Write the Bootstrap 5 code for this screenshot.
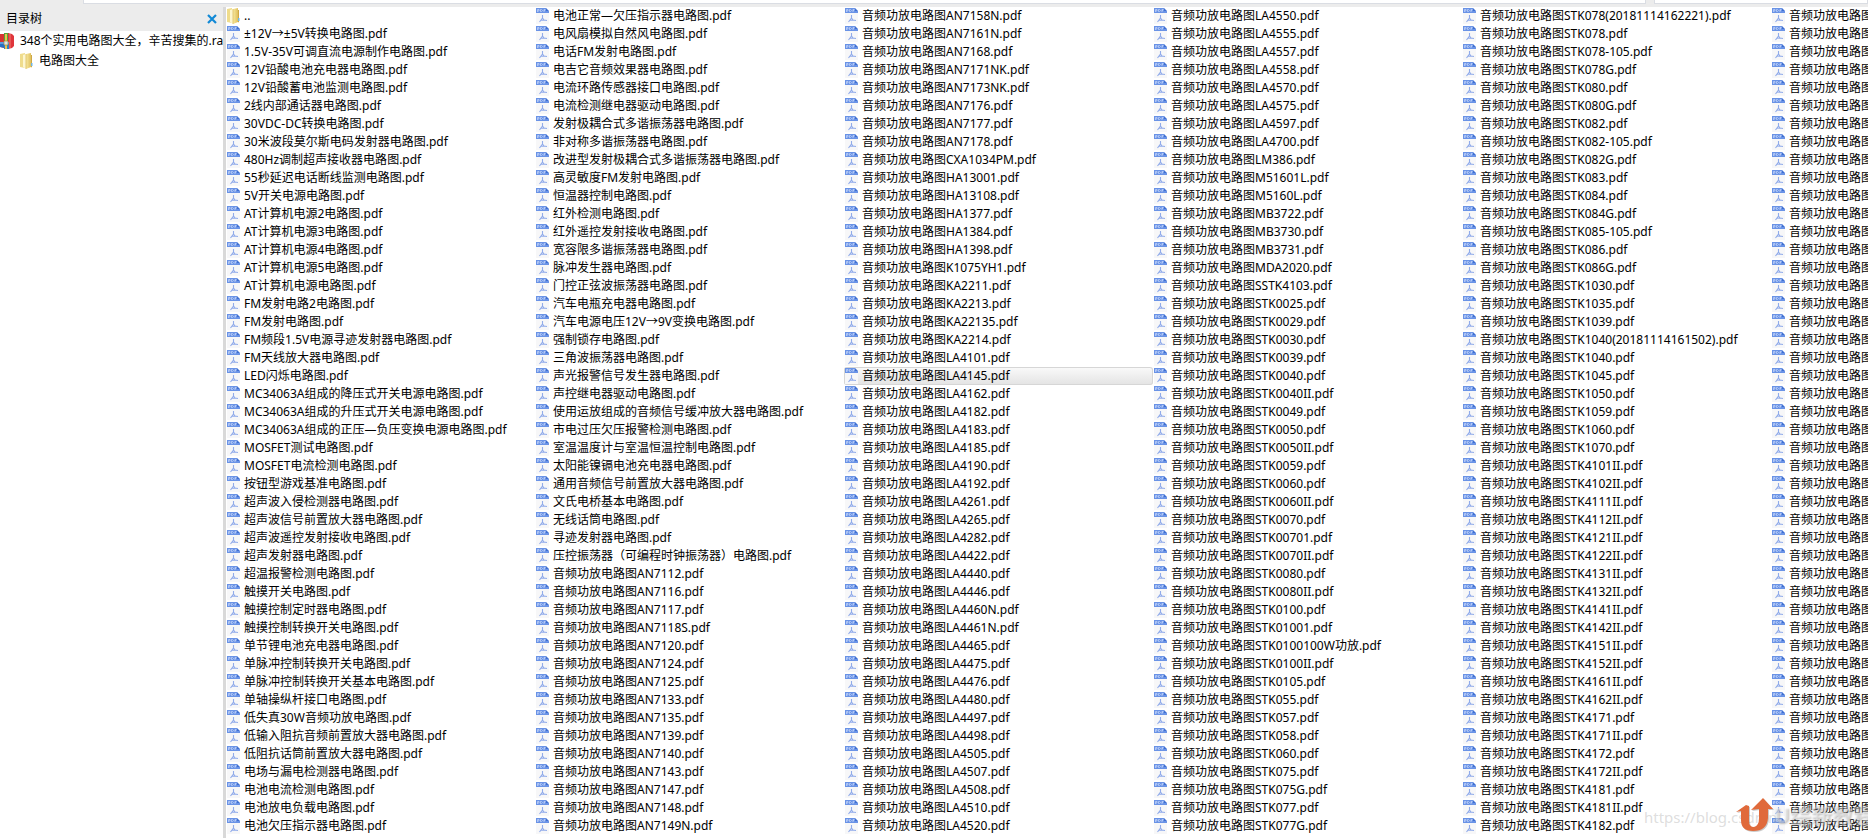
<!DOCTYPE html>
<html lang="zh-CN">
<head>
<meta charset="utf-8">
<meta name="viewport" content="width=device-width, initial-scale=1">
<title>348个实用电路图大全</title>
<link href="https://cdn.jsdelivr.net/npm/bootstrap@5.3.0/dist/css/bootstrap.min.css" rel="stylesheet">
<style>
  body { font-family: "Noto Sans", "Noto Sans CJK SC", sans-serif; font-size: 12px; line-height: 18px; color: #000; background: #fff; }
  a { color: inherit; text-decoration: none; }
  .toolbar-strip { height: 7px; background: #ececec; }
  .toolbar-strip > div { height: 4px; background: #fff; border: 1px solid #dadde3; border-top: 0; }
  .strip-start { width: 83px; flex: none; }
  .strip-end { width: 214px; flex: none; }
  .tree-pane { width: 223px; }
  .tree-head { height: 24px; background: #ececec; padding: 0 2px 0 6px; }
  .tree-close { border: 0; background: none; padding: 0; line-height: 0; }
  .tree-item { height: 20px; white-space: nowrap; }
  .splitter { width: 3px; background: #d9d9d9; }
  .file-grid { display: grid; grid-auto-flow: column; grid-template-rows: repeat(46, 18px); grid-auto-columns: 309px; }
  .file-row { display: flex; align-items: center; gap: 4px; padding-left: 1px; white-space: nowrap; height: 18px; line-height: 17px; border-radius: 3px; }
  .file-row.hovered { background: linear-gradient(#fafafa, #e3e3e3); box-shadow: inset 0 0 0 1px #d6d6d6; }
  .file-row svg { flex: none; }
  .file-row span { height: 18px; }
  .watermark { right: 0; bottom: 4px; height: 36px; pointer-events: none; }
  .mark-url { font-size: 15px; color: rgba(170, 170, 170, .4); width: 92px; white-space: nowrap; padding-top: 10px; }
  .mark-name { font-size: 21px; font-weight: 700; color: rgba(255, 255, 255, .35); text-shadow: 1px 1px 2px rgba(130, 130, 130, .5); white-space: nowrap; width: 94px; overflow: hidden; }
</style>
</head>
<body class="d-flex flex-column min-vh-100 overflow-hidden position-relative">

<svg class="position-absolute" width="0" height="0" aria-hidden="true">
  <linearGradient id="gold" x1="0" x2="1" y1="0" y2="0">
    <stop offset="0" stop-color="#f8e9a0"/><stop offset="1" stop-color="#dfbf5c"/>
  </linearGradient>
  <symbol id="icon-pdf" viewBox="0 0 13 16">
    <path d="M0 0H10L13 4V16H0Z" fill="#f7f7f8"/>
    <path d="M0 0H10V3H13V5H0Z" fill="#6a93e6"/>
    <path d="M10 0L13 3H10Z" fill="#3f6fd0"/>
    <path d="M1.5 4V1.5H3V3H1.5M4.500 1.500V3.500H5.500L6.500 2.500L5.500 1.500ZM8 4V1.500H9.500M8 2.500H9" fill="none" stroke="#bfd1f7" stroke-width=".8"/>
    <path d="M6.500 7V10L3.500 14M6.500 10L8 12L11 12.500M5 12.200L8 12" fill="none" stroke="#90abea" stroke-width="1.100"/>
  </symbol>
  <symbol id="icon-folder" viewBox="0 0 13 16">
    <path d="M0 1L5 0V15L0 14Z" fill="#efdc8c"/>
    <path d="M3 2L6 1V16L3 14Z" fill="#fdf6cf"/>
    <path d="M6 1L11 0V14L6 16Z" fill="url(#gold)"/>
    <path d="M11 2H12V14L11 14.500Z" fill="#cfa845"/>
    <path d="M11 10H12.500V13H11Z" fill="#6fb6e8"/>
    <path d="M6 1V16" stroke="#d5b455" stroke-width=".7"/>
  </symbol>
  <symbol id="icon-archive" viewBox="0 0 14 16">
    <path d="M0 1H4V15L0 14Z" fill="#d73432"/>
    <path d="M0 9H5V15L0 14Z" fill="#276fc4"/>
    <path d="M4 0H9V16H4Z" fill="#53a53a"/>
    <path d="M8 0L12 1L14 3V13L12 15L8 16Z" fill="#df353b"/>
    <path d="M10 1V15" stroke="#f17d72"/>
    <path d="M4 11H9V16H4Z" fill="#2b83c8"/>
    <path d="M5 1H7V16H5Z" fill="#ecc54b"/>
    <path d="M0 9H9V11H0Z" fill="#5a9ce0"/>
    <path d="M4 8H8V12H4Z" fill="#d9e4e8" stroke="#a78a3a" stroke-width=".7"/>
  </symbol>
</svg>

<div class="toolbar-strip d-flex">
  <span class="strip-start"></span>
  <div class="flex-grow-1"></div>
  <span class="px-1"></span>
  <div class="strip-end"></div>
</div>

<main class="d-flex flex-grow-1 overflow-hidden">
  <aside class="tree-pane flex-shrink-0 overflow-hidden">
    <div class="tree-head d-flex align-items-center justify-content-between">
      <span>目录树</span>
      <button class="tree-close pe-1" type="button" aria-label="关闭">
        <svg width="10" height="10" viewBox="0 0 10 10"><path d="M1 1L9 9M9 1L1 9" stroke="#1189d6" stroke-width="2.200"/></svg>
      </button>
    </div>
    <ul class="list-unstyled mb-0">
      <li><a href="#" class="tree-item d-flex align-items-center"><svg class="flex-shrink-0 me-1" width="16" height="16" viewBox="0 0 16 16"><use href="#icon-archive" width="14" height="16"/></svg>348个实用电路图大全，辛苦搜集的.rar</a></li>
      <li><a href="#" class="tree-item d-flex align-items-center ps-3"><svg class="flex-shrink-0 ms-1 me-1" width="15" height="16" viewBox="0 0 15 16"><use href="#icon-folder" width="13" height="16"/></svg>电路图大全</a></li>
    </ul>
  </aside>
  <div class="splitter flex-shrink-0"></div>
  <ul class="file-grid list-unstyled mb-0 overflow-hidden flex-grow-1" id="files"></ul>
</main>

<div class="watermark position-absolute d-flex">
  <span class="mark-url">https://blog.csdn.n</span>
  <svg class="flex-shrink-0" width="38" height="35" viewBox="0 0 38 35">
    <path d="M0 14L10 7L13 8V23Q13 29 18 29Q23 28 23 20V11L15 12L27 0L37 11H32V20Q31 33 17 33Q5 33 5 22V13Z" transform="translate(1 1)" fill="#8a8a8a" opacity=".45"/>
    <path d="M0 14L10 7L13 8V23Q13 29 18 29Q23 28 23 20V11L15 12L27 0L37 11H32V20Q31 33 17 33Q5 33 5 22V13Z" fill="#e06a3b"/>
  </svg>
  <span class="mark-name pt-2">U综新教程</span>
</div>

<script>
const amp = '音频功放电路图';
const general = `±12V→±5V转换 1.5V-35V可调直流电源制作 12V铅酸电池充电器 12V铅酸蓄电池监测 2线内部通话器 30VDC-DC转换 30米波段莫尔斯电码发射器 480Hz调制超声接收器 55秒延迟电话断线监测 5V开关电源
AT计算机电源2 AT计算机电源3 AT计算机电源4 AT计算机电源5 AT计算机电源 FM发射电路2 FM发射 FM频段1.5V电源寻迹发射器 FM天线放大器 LED闪烁
MC34063A组成的降压式开关电源 MC34063A组成的升压式开关电源 MC34063A组成的正压—负压变换电源 MOSFET测试 MOSFET电流检测 按钮型游戏基准 超声波入侵检测器 超声波信号前置放大器 超声波遥控发射接收 超声发射器
超温报警检测 触摸开关 触摸控制定时器 触摸控制转换开关 单节锂电池充电器 单脉冲控制转换开关 单脉冲控制转换开关基本 单轴操纵杆接口 低失真30W音频功放 低输入阻抗音频前置放大器
低阻抗话筒前置放大器 电场与漏电检测器 电池电流检测 电池放电负载 电池欠压指示器
电池正常—欠压指示器 电风扇模拟自然风 电话FM发射 电吉它音频效果器 电流环路传感器接口 电流检测继电器驱动 发射极耦合式多谐振荡器 非对称多谐振荡器 改进型发射极耦合式多谐振荡器 高灵敏度FM发射
恒温器控制 红外检测 红外遥控发射接收 宽容限多谐振荡器 脉冲发生器 门控正弦波振荡器 汽车电瓶充电器 汽车电源电压12V→9V变换 强制锁存 三角波振荡器
声光报警信号发生器 声控继电器驱动 使用运放组成的音频信号缓冲放大器 市电过压欠压报警检测 室温温度计与室温恒温控制 太阳能镍镉电池充电器 通用音频信号前置放大器 文氏电桥基本 无线话筒 寻迹发射器 压控振荡器（可编程时钟振荡器）`;
const amplifiers = `AN7112 AN7116 AN7117 AN7118S AN7120 AN7124 AN7125 AN7133 AN7135 AN7139 AN7140 AN7143 AN7147 AN7148 AN7149N
AN7158N AN7161N AN7168 AN7171NK AN7173NK AN7176 AN7177 AN7178 CXA1034PM HA13001 HA13108 HA1377 HA1384 HA1398 K1075YH1 KA2211 KA2213 KA22135 KA2214 LA4101 LA4145 LA4162 LA4182 LA4183 LA4185 LA4190 LA4192 LA4261 LA4265 LA4282 LA4422 LA4440 LA4446 LA4460N LA4461N LA4465 LA4475 LA4476 LA4480 LA4497 LA4498 LA4505 LA4507 LA4508 LA4510 LA4520
LA4550 LA4555 LA4557 LA4558 LA4570 LA4575 LA4597 LA4700 LM386 M51601L M5160L MB3722 MB3730 MB3731 MDA2020 SSTK4103 STK0025 STK0029 STK0030 STK0039 STK0040 STK0040II STK0049 STK0050 STK0050II STK0059 STK0060 STK0060II STK0070 STK00701 STK0070II STK0080 STK0080II STK0100 STK01001 STK0100100W功放 STK0100II STK0105 STK055 STK057 STK058 STK060 STK075 STK075G STK077 STK077G
STK078(20181114162221) STK078 STK078-105 STK078G STK080 STK080G STK082 STK082-105 STK082G STK083 STK084 STK084G STK085-105 STK086 STK086G STK1030 STK1035 STK1039 STK1040(20181114161502) STK1040 STK1045 STK1050 STK1059 STK1060 STK1070 STK4101II STK4102II STK4111II STK4112II STK4121II STK4122II STK4131II STK4132II STK4141II STK4142II STK4151II STK4152II STK4161II STK4162II STK4171 STK4171II STK4172 STK4172II STK4181 STK4181II STK4182`;

const names = ['..']
  .concat(general.split(/\s+/).map(n => n + '电路图.pdf'))
  .concat(amplifiers.split(/\s+/).map(n => amp + n + '.pdf'))
  .concat(Array(46).fill(amp));

document.getElementById('files').innerHTML = names.map(n =>
  `<li><a href="#" class="file-row${n.includes('LA4145') ? ' hovered' : ''}"><svg width="13" height="16"><use href="#icon-${n === '..' ? 'folder' : 'pdf'}"/></svg><span>${n}</span></a></li>`
).join('');
</script>
<script src="https://cdn.jsdelivr.net/npm/bootstrap@5.3.0/dist/js/bootstrap.bundle.min.js"></script>
</body>
</html>
